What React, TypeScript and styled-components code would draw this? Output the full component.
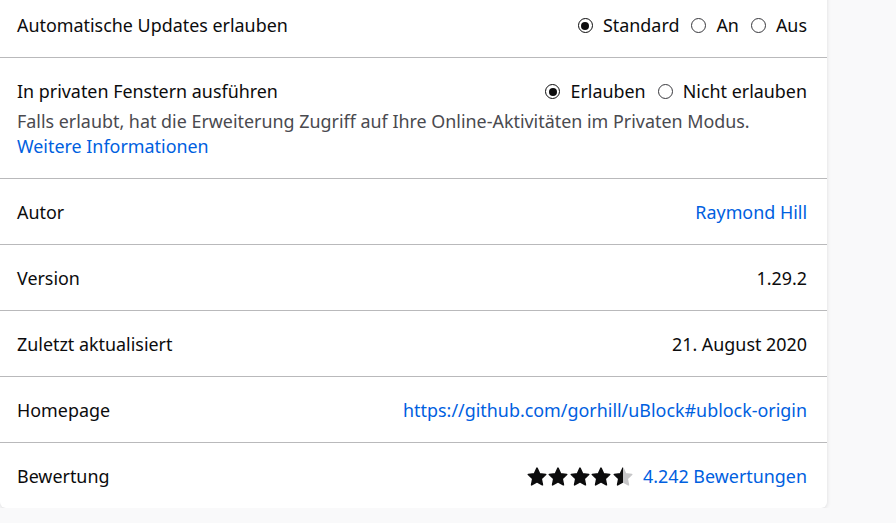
import React from 'react';
import styled, { createGlobalStyle } from 'styled-components';

const GlobalStyle = createGlobalStyle`
  html, body {
    margin: 0;
    padding: 0;
    background: #f9f9fa;
    font-family: "Noto Sans", "Open Sans", sans-serif;
    color: #0c0c0d;
  }
`;

const Card = styled.section`
  width: 827px;
  margin-top: -8px;
  background: #fff;
  border-radius: 0 0 6px 6px;
  box-shadow: 0 1px 4px rgba(12, 12, 13, 0.12);
  font-size: 17.9px;
`;

const Row = styled.div`
  padding: 21px 20px 19px 17px;
  border-bottom: 1px solid #b9b9bb;
  &:last-child {
    border-bottom: none;
  }
`;

const Line = styled.div`
  display: flex;
  justify-content: space-between;
  align-items: center;
  height: 25px;
  line-height: 25px;
`;

const Desc = styled.div`
  margin-top: 5px;
  line-height: 25px;
  color: #4a4a4f;
`;

const Link = styled.a`
  color: #0060df;
  text-decoration: none;
  cursor: pointer;
`;

const RadioGroup = styled.div`
  display: flex;
  align-items: center;
  gap: 12px;
`;

const RadioLabel = styled.label`
  display: flex;
  align-items: center;
  gap: 10px;
`;

const RadioDot = styled.span<{ $checked?: boolean }>`
  box-sizing: border-box;
  width: 15px;
  height: 15px;
  border-radius: 50%;
  border: ${(p) => (p.$checked ? '1.5px solid #0c0c0d' : '1px solid #38383d')};
  display: flex;
  align-items: center;
  justify-content: center;
  &::after {
    content: '';
    display: ${(p) => (p.$checked ? 'block' : 'none')};
    width: 8px;
    height: 8px;
    border-radius: 50%;
    background: #0c0c0d;
  }
`;

const Rating = styled.div`
  display: flex;
  align-items: center;
  gap: 10px;
`;

const Stars = styled.div`
  display: flex;
  gap: 1.5px;
`;

const starPath =
  'M10 1.2l2.6 5.6 6.1.7-4.5 4.2 1.2 6.1L10 14.8l-5.4 3 1.2-6.1L1.3 7.5l6.1-.7z';

const Star = ({ fill }: { fill: 'full' | 'half' }) => (
  <svg width="20" height="20" viewBox="0 0 20 20">
    <defs>
      <linearGradient id="half">
        <stop offset="50%" stopColor="#0c0c0d" />
        <stop offset="50%" stopColor="#c6c6c8" />
      </linearGradient>
    </defs>
    <path
      d={starPath}
      fill={fill === 'full' ? '#0c0c0d' : 'url(#half)'}
      stroke={fill === 'full' ? '#0c0c0d' : 'url(#half)'}
      strokeWidth="1.6"
      strokeLinejoin="round"
    />
  </svg>
);

const Radio = ({ label, checked }: { label: string; checked?: boolean }) => (
  <RadioLabel>
    <RadioDot $checked={checked} />
    <span>{label}</span>
  </RadioLabel>
);

const App = () => {
  return (
    <>
      <GlobalStyle />
      <Card>
        <Row>
          <Line>
            <span>Automatische Updates erlauben</span>
            <RadioGroup>
              <Radio label="Standard" checked />
              <Radio label="An" />
              <Radio label="Aus" />
            </RadioGroup>
          </Line>
        </Row>
        <Row>
          <Line>
            <span>In privaten Fenstern ausführen</span>
            <RadioGroup>
              <Radio label="Erlauben" checked />
              <Radio label="Nicht erlauben" />
            </RadioGroup>
          </Line>
          <Desc>
            Falls erlaubt, hat die Erweiterung Zugriff auf Ihre Online-Aktivitäten im Privaten Modus.
            <br />
            <Link>Weitere Informationen</Link>
          </Desc>
        </Row>
        <Row>
          <Line>
            <span>Autor</span>
            <Link>Raymond Hill</Link>
          </Line>
        </Row>
        <Row>
          <Line>
            <span>Version</span>
            <span>1.29.2</span>
          </Line>
        </Row>
        <Row>
          <Line>
            <span>Zuletzt aktualisiert</span>
            <span>21. August 2020</span>
          </Line>
        </Row>
        <Row>
          <Line>
            <span>Homepage</span>
            <Link>https://github.com/gorhill/uBlock#ublock-origin</Link>
          </Line>
        </Row>
        <Row>
          <Line>
            <span>Bewertung</span>
            <Rating>
              <Stars>
                <Star fill="full" />
                <Star fill="full" />
                <Star fill="full" />
                <Star fill="full" />
                <Star fill="half" />
              </Stars>
              <Link>4.242 Bewertungen</Link>
            </Rating>
          </Line>
        </Row>
      </Card>
    </>
  );
};

export default App;
